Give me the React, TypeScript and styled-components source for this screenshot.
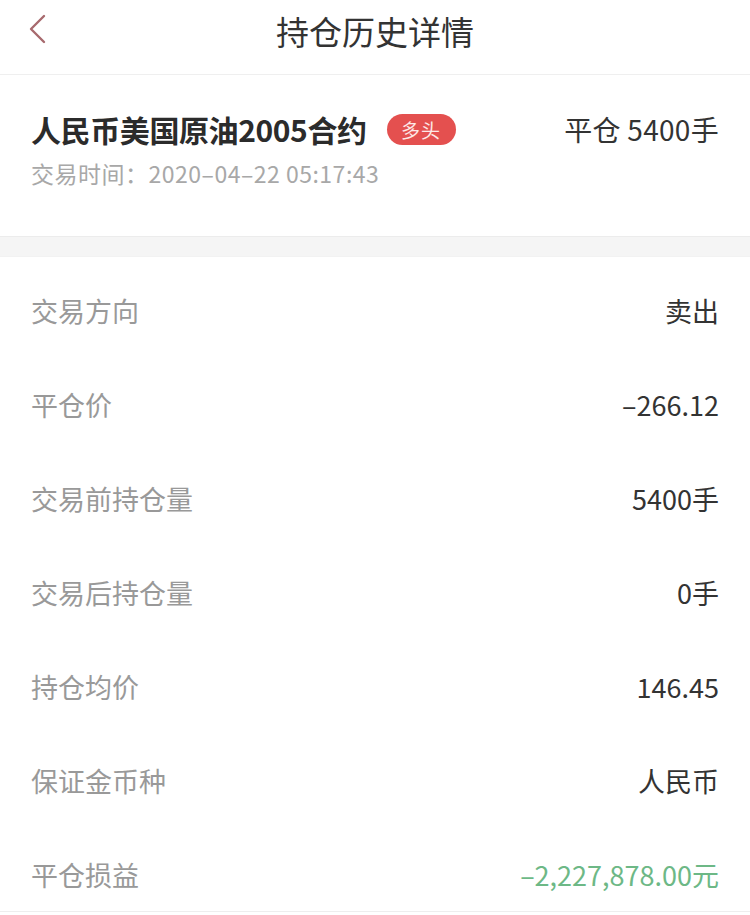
import styled, { createGlobalStyle } from "styled-components";

const GlobalStyle = createGlobalStyle`
  html, body {
    margin: 0;
    padding: 0;
    background: #ffffff;
  }
  body {
    font-family: "Noto Sans CJK SC", "Noto Sans", "Liberation Sans", sans-serif;
    color: #333;
  }
`;

type Detail = {
  label: string;
  value: string;
  tone?: "normal" | "loss";
};

const details: Detail[] = [
  { label: "交易方向", value: "卖出" },
  { label: "平仓价", value: "–266.12" },
  { label: "交易前持仓量", value: "5400手" },
  { label: "交易后持仓量", value: "0手" },
  { label: "持仓均价", value: "146.45" },
  { label: "保证金币种", value: "人民币" },
  { label: "平仓损益", value: "–2,227,878.00元", tone: "loss" },
];

export default function App() {
  return (
    <>
      <GlobalStyle />
      <Page>
        <Header>
          <BackButton aria-label="返回">
            <svg width="20" height="30" viewBox="0 0 20 30">
              <polyline
                points="17,2 4,15 17,28"
                fill="none"
                stroke="#a86a6e"
                strokeWidth="2.4"
                strokeLinecap="round"
                strokeLinejoin="round"
              />
            </svg>
          </BackButton>
          <HeaderTitle>持仓历史详情</HeaderTitle>
        </Header>

        <Summary>
          <SummaryTop>
            <NameGroup>
              <ContractName>人民币美国原油2005合约</ContractName>
              <Badge>多头</Badge>
            </NameGroup>
            <CloseAmount>平仓 5400手</CloseAmount>
          </SummaryTop>
          <TradeTime>交易时间：2020–04–22 05:17:43</TradeTime>
        </Summary>

        <Divider />

        <DetailList>
          {details.map((d) => (
            <DetailRow key={d.label}>
              <Label>{d.label}</Label>
              <Value $tone={d.tone ?? "normal"}>{d.value}</Value>
            </DetailRow>
          ))}
        </DetailList>
      </Page>
    </>
  );
}

const Page = styled.div`
  width: 750px;
  background: #fff;
`;

const Header = styled.div`
  position: relative;
  height: 75px;
  padding-bottom: 12px;
  box-sizing: border-box;
  display: flex;
  align-items: center;
  justify-content: center;
  border-bottom: 1px solid #efefef;
`;

const BackButton = styled.div`
  position: absolute;
  left: 27px;
  top: 14px;
  display: flex;
`;

const HeaderTitle = styled.div`
  font-size: 33px;
  line-height: 40px;
  color: #333;
`;

const Summary = styled.div`
  padding: 36px 31px 48px 31px;
`;

const SummaryTop = styled.div`
  display: flex;
  align-items: center;
  justify-content: space-between;
  height: 36px;
`;

const NameGroup = styled.div`
  display: flex;
  align-items: center;
`;

const ContractName = styled.div`
  font-size: 30px;
  font-weight: 700;
  line-height: 36px;
  color: #2b2b2b;
  letter-spacing: -0.4px;
`;

const Badge = styled.span`
  margin-left: 20px;
  height: 31px;
  width: 69px;
  border-radius: 16px;
  background: #e4504f;
  color: #fde8e6;
  font-size: 19px;
  display: flex;
  align-items: center;
  justify-content: center;
  letter-spacing: 1px;
`;

const CloseAmount = styled.div`
  font-size: 28px;
  line-height: 36px;
  color: #333;
  letter-spacing: 0.3px;
`;

const TradeTime = styled.div`
  margin-top: 11px;
  font-size: 23px;
  line-height: 30px;
  color: #a8a8a8;
  letter-spacing: 0.5px;
`;

const Divider = styled.div`
  height: 21px;
  background: #f5f5f5;
  border-top: 1px solid #ececec;
  border-bottom: 1px solid #f2f2f2;
  box-sizing: border-box;
`;

const DetailList = styled.div`
  padding: 0 31px;
  border-bottom: 1px solid #eeeeee;
`;

const DetailRow = styled.div`
  height: 94px;
  padding-top: 12px;
  box-sizing: border-box;
  display: flex;
  align-items: center;
  justify-content: space-between;

  &:last-child {
    height: 90px;
    padding-top: 16px;
  }
`;

const Label = styled.span`
  font-size: 27px;
  color: #999;
`;

const Value = styled.span<{ $tone: "normal" | "loss" }>`
  font-size: 27px;
  color: ${(p) => (p.$tone === "loss" ? "#6db886" : "#333")};
`;
